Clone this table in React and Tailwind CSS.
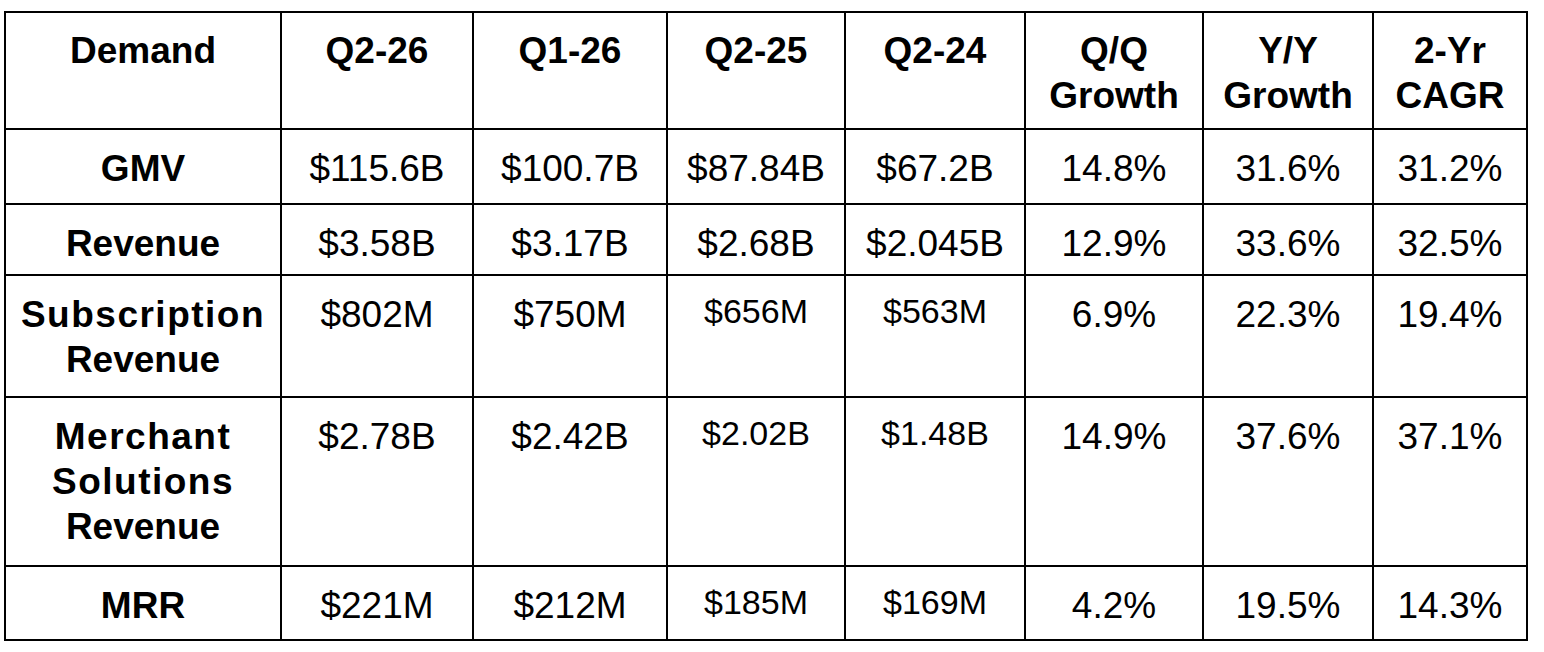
import React from "react";

const header = [
  ["Demand"],
  ["Q2-26"],
  ["Q1-26"],
  ["Q2-25"],
  ["Q2-24"],
  ["Q/Q", "Growth"],
  ["Y/Y", "Growth"],
  ["2-Yr", "CAGR"],
];

const wide = { Subscription: true, Merchant: true, Solutions: true };

const rows = [
  [["GMV"], "$115.6B", "$100.7B", "$87.84B", "$67.2B", "14.8%", "31.6%", "31.2%"],
  [["Revenue"], "$3.58B", "$3.17B", "$2.68B", "$2.045B", "12.9%", "33.6%", "32.5%"],
  [["Subscription", "Revenue"], "$802M", "$750M", "$656M", "$563M", "6.9%", "22.3%", "19.4%"],
  [["Merchant", "Solutions", "Revenue"], "$2.78B", "$2.42B", "$2.02B", "$1.48B", "14.9%", "37.6%", "37.1%"],
  [["MRR"], "$221M", "$212M", "$185M", "$169M", "4.2%", "19.5%", "14.3%"],
];

export default function App() {
  return (
    <div
      className="w-[1544px] h-[652px] bg-white pt-[11px] pl-[4px] text-black"
      style={{ fontFamily: '"Liberation Sans", Arial, sans-serif' }}
    >
      <div className="grid w-fit grid-cols-[274px_190px_192px_176px_178px_176px_168px_152px] grid-rows-[115px_73px_69px_120px_167px_72px] gap-[2px] bg-black p-[2px] text-[37px] leading-[45px]">
        {header.map((lines, i) => (
          <div key={"h" + i} className="bg-white pt-[15px] text-center font-bold">
            {lines.map((l) => (
              <div key={l}>{l}</div>
            ))}
          </div>
        ))}
        {rows.map((r, ri) => (
          <React.Fragment key={ri}>
            <div className="bg-white pt-[16px] text-center font-bold">
              {r[0].map((l) => (
                <div key={l} className={wide[l] ? "tracking-[1.5px]" : ""}>
                  {l}
                </div>
              ))}
            </div>
            {r.slice(1).map((v, ci) => {
              const small = ri >= 2 && (ci === 2 || ci === 3);
              return (
                <div
                  key={ci}
                  className={
                    small
                      ? "bg-white pt-[13px] text-center text-[34px]"
                      : "bg-white pt-[16px] text-center"
                  }
                >
                  {v}
                </div>
              );
            })}
          </React.Fragment>
        ))}
      </div>
    </div>
  );
}
